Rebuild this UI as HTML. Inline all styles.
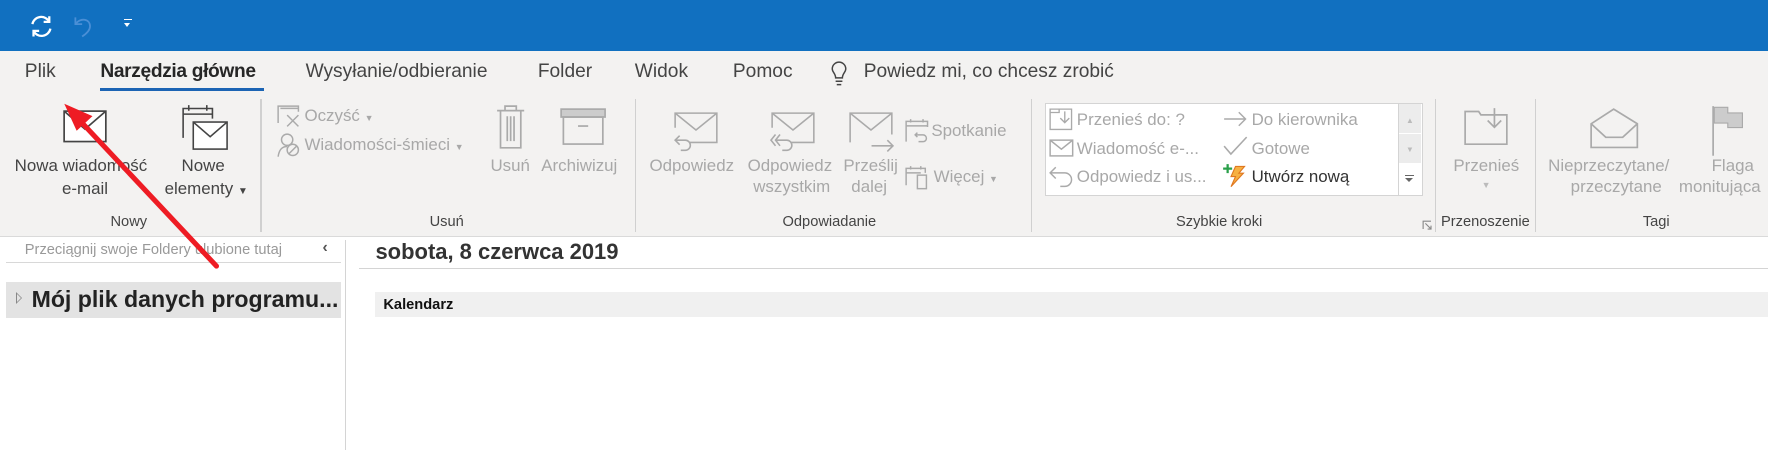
<!DOCTYPE html>
<html><head><meta charset="utf-8"><style>
html,body{margin:0;padding:0;background:#fff;overflow:hidden}
body{width:1768px;height:450px}
#w{position:relative;width:1568px;height:399px;zoom:1.12755;font-family:"Liberation Sans",sans-serif;color:#444;overflow:hidden}
.a{position:absolute;white-space:nowrap}
.g{color:#a8a8a8}
.t{font-size:17px;top:54px;color:#444}
.r{font-size:15px}
.lbl{font-size:13px;top:190px;color:#444}
.sep{position:absolute;width:1px;background:#d0d0d0;top:88px;height:118px}
svg{position:absolute;overflow:visible}
</style></head><body><div id="w">
<div class="a" style="left:0;top:0;width:1568px;height:45px;background:#1170c0"></div>
<svg style="left:26px;top:12px" width="22" height="22" viewBox="0 0 22 22" fill="none" stroke="#fff" stroke-width="2"><path d="M3 9 A8 8 0 0 1 18 7"/><path d="M19 13 A8 8 0 0 1 4 15"/><path d="M18 2 V7 H13" /><path d="M4 20 V15 H9"/></svg>
<svg style="left:64px;top:12px" width="22" height="22" viewBox="0 0 22 22" fill="none" stroke="#4a8fd6" stroke-width="1.6"><path d="M3 3 V9 H9"/><path d="M3 9 C7 3 16 4 16 11 C16 15 12 18 9 20"/></svg>
<div class="a" style="left:110px;top:17px;width:7px;height:1px;background:#fff"></div>
<div class="a" style="left:110px;top:20px;width:0;height:0;border-left:3.5px solid transparent;border-right:3.5px solid transparent;border-top:4px solid #fff"></div>

<div class="a" style="left:0;top:45px;width:1568px;height:164px;background:#f3f2f1;border-bottom:1px solid #dadada"></div>
<div class="a t" style="left:22px">Plik</div>
<div class="a t" style="left:89px;color:#262626;font-weight:bold;letter-spacing:-0.3px">Narzędzia główne</div>
<div class="a" style="left:89px;top:78px;width:145px;height:3px;background:#1b64b4"></div>
<div class="a t" style="left:271px">Wysyłanie/odbieranie</div>
<div class="a t" style="left:477px">Folder</div>
<div class="a t" style="left:563px">Widok</div>
<div class="a t" style="left:650px">Pomoc</div>
<svg style="left:736px;top:54px" width="16" height="22" viewBox="0 0 16 22" fill="none" stroke="#444" stroke-width="1.3"><path d="M5 15 C5 11 2 10 2 7 A6 6 0 0 1 14 7 C14 10 11 11 11 15 Z"/><path d="M5 18 H11 M6 21 H10"/></svg>
<div class="a t" style="left:766px">Powiedz mi, co chcesz zrobić</div>

<div class="sep" style="left:231px"></div><div class="sep" style="left:563px"></div><div class="sep" style="left:914px"></div><div class="sep" style="left:1273px"></div><div class="sep" style="left:1361px"></div>

<!-- Nowy -->
<svg style="left:56px;top:98px" width="40" height="30" viewBox="0 0 40 30" fill="#fff" stroke="#444" stroke-width="1.5"><rect x="1" y="1" width="37" height="27"/><path d="M1 1 L19.5 17 L38 1" fill="none"/></svg>
<svg style="left:161px;top:92px" width="42" height="42" viewBox="0 0 42 42" fill="none" stroke="#444" stroke-width="1.4"><path d="M1 30 V4 H27 V13"/><path d="M1 9 H27"/><path d="M6 1 V6 M22 1 V6"/><rect x="10" y="16" width="30" height="24" fill="#fff"/><path d="M10 16 L25 29 L40 16"/></svg>
<div class="a r" style="left:13px;top:138px">Nowa wiadomość</div>
<div class="a r" style="left:55px;top:159px">e-mail</div>
<div class="a r" style="left:161px;top:138px">Nowe</div>
<div class="a r" style="left:146px;top:159px">elementy <span style="font-size:9px">▼</span></div>
<div class="a lbl" style="left:98px">Nowy</div>

<!-- Usuń -->
<svg style="left:246px;top:93px" width="22" height="20" viewBox="0 0 22 20" fill="none" stroke="#aaa" stroke-width="1.3"><path d="M1 16 V1 H19 V6"/><path d="M3 3 H19"/><path d="M9 9 L19 19 M19 9 L9 19"/></svg>
<div class="a r g" style="left:270px;top:94px">Oczyść <span style="font-size:8px">▼</span></div>
<svg style="left:246px;top:118px" width="22" height="22" viewBox="0 0 22 22" fill="none" stroke="#aaa" stroke-width="1.3"><circle cx="9" cy="6" r="5"/><path d="M1 21 C2 14 5 12 9 12"/><circle cx="14" cy="15" r="5"/><path d="M10.5 18.5 L17.5 11.5"/></svg>
<div class="a r g" style="left:270px;top:120px">Wiadomości-śmieci <span style="font-size:8px">▼</span></div>
<svg style="left:440px;top:93px" width="26" height="40" viewBox="0 0 26 40" fill="none" stroke="#aaa" stroke-width="1.5"><path d="M1 5 H25 M8 5 V1 H18 V5"/><path d="M4 5 V38 H22 V5"/><path d="M10 10 V32 M13 10 V32 M16 10 V32"/></svg>
<div class="a r g" style="left:435px;top:138px">Usuń</div>
<svg style="left:497px;top:96px" width="42" height="34" viewBox="0 0 42 34" fill="none" stroke="#aaa" stroke-width="1.5"><rect x="1" y="1" width="39" height="7" fill="#ccc"/><rect x="3" y="8" width="35" height="24"/><path d="M16 16 H25"/></svg>
<div class="a r g" style="left:480px;top:138px">Archiwizuj</div>
<div class="a lbl" style="left:381px">Usuń</div>

<!-- Odpowiadanie -->
<svg style="left:598px;top:99px" width="40" height="36" viewBox="0 0 40 36" fill="none" stroke="#aaa" stroke-width="1.4"><path d="M14 27 H38 V1 H1 V14"/><path d="M1 1 L19.5 16 L38 1"/><path d="M5 21 L1 25 L5 29"/><path d="M1 25 H10 A4 4 0 0 1 10 34 H6"/></svg>
<svg style="left:684px;top:99px" width="40" height="36" viewBox="0 0 40 36" fill="none" stroke="#aaa" stroke-width="1.4"><path d="M18 27 H38 V1 H1 V14"/><path d="M1 1 L19.5 16 L38 1"/><path d="M8 20 L4 25 L8 30 M4 20 L0 25 L4 30"/><path d="M4 25 H14 A4 4 0 0 1 14 34 H10"/></svg>
<svg style="left:753px;top:99px" width="42" height="36" viewBox="0 0 42 36" fill="none" stroke="#aaa" stroke-width="1.4"><path d="M1 27 V1 H38 V20"/><path d="M1 1 L19.5 16 L38 1"/><path d="M20 30 H39 M34 25 L39 30 L34 35"/></svg>
<div class="a r g" style="left:576px;top:138px">Odpowiedz</div>
<div class="a r g" style="left:663px;top:138px">Odpowiedz</div>
<div class="a r g" style="left:668px;top:157px">wszystkim</div>
<div class="a r g" style="left:748px;top:138px">Prześlij</div>
<div class="a r g" style="left:755px;top:157px">dalej</div>
<svg style="left:803px;top:105px" width="22" height="22" viewBox="0 0 22 22" fill="none" stroke="#aaa" stroke-width="1.3"><path d="M1 21 V3 H20 V8 M1 7 H20 M5 1 V4 M16 1 V4"/><path d="M11 13 L9 15 L11 17 M9 15 H16 A3 3 0 0 1 16 21 H12"/></svg>
<div class="a r g" style="left:826px;top:107px">Spotkanie</div>
<svg style="left:803px;top:146px" width="22" height="22" viewBox="0 0 22 22" fill="none" stroke="#aaa" stroke-width="1.3"><path d="M1 18 V3 H18 V7 M1 7 H14 M5 1 V4 M14 1 V4"/><rect x="11" y="9" width="8" height="12"/></svg>
<div class="a r g" style="left:828px;top:148px">Więcej <span style="font-size:8px">▼</span></div>
<div class="a lbl" style="left:694px">Odpowiadanie</div>

<!-- Szybkie kroki -->
<div class="a" style="left:927px;top:91px;width:333px;height:81px;background:#fff;border:1px solid #d4d4d4"></div>
<div class="a" style="left:1240px;top:92px;width:1px;height:81px;background:#d4d4d4"></div>
<div class="a" style="left:1241px;top:92px;width:19px;height:26px;background:#ececec"></div>
<div class="a" style="left:1241px;top:119px;width:19px;height:26px;background:#ececec"></div>
<div class="a" style="left:1247px;top:103px;font-size:7px;color:#bbb">▲</div>
<div class="a" style="left:1247px;top:129px;font-size:7px;color:#bbb">▼</div>
<div class="a" style="left:1246px;top:155px;width:8px;height:1px;background:#666"></div>
<div class="a" style="left:1246px;top:158px;border-left:4px solid transparent;border-right:4px solid transparent;border-top:4px solid #666"></div>
<svg style="left:930px;top:96px" width="22" height="20" viewBox="0 0 22 20" fill="none" stroke="#aaa" stroke-width="1.2"><path d="M1 19 V1 H20 V19 Z M1 4 H9 V1"/><path d="M14 3 V13 M10 9 L14 13 L18 9"/></svg>
<div class="a r g" style="left:955px;top:98px">Przenieś do: ?</div>
<svg style="left:930px;top:123px" width="22" height="16" viewBox="0 0 22 16" fill="none" stroke="#aaa" stroke-width="1.3"><rect x="1" y="1" width="20" height="14"/><path d="M1 1 L11 9 L21 1"/></svg>
<div class="a r g" style="left:955px;top:123px">Wiadomość e-...</div>
<svg style="left:930px;top:146px" width="22" height="20" viewBox="0 0 22 20" fill="none" stroke="#aaa" stroke-width="1.3"><path d="M6 2 L1 7 L6 12 M1 7 H14 A6 6 0 0 1 14 19 H10"/></svg>
<div class="a r g" style="left:955px;top:148px">Odpowiedz i us...</div>
<svg style="left:1085px;top:98px" width="22" height="16" viewBox="0 0 22 16" fill="none" stroke="#aaa" stroke-width="1.3"><path d="M1 8 H20 M14 2 L20 8 L14 14"/></svg>
<div class="a r g" style="left:1110px;top:98px">Do kierownika</div>
<svg style="left:1085px;top:121px" width="22" height="18" viewBox="0 0 22 18" fill="none" stroke="#aaa" stroke-width="1.4"><path d="M1 9 L7 16 L21 1"/></svg>
<div class="a r g" style="left:1110px;top:123px">Gotowe</div>
<svg style="left:1084px;top:145px" width="22" height="22" viewBox="0 0 22 22"><path d="M1 5 H9 M5 1 V9" stroke="#2aa04a" stroke-width="2"/><path d="M12 3 H20 L15 9 H19 L8 21 L12 12 H8 Z" fill="#f6b042" stroke="#e07820" stroke-width="1"/></svg>
<div class="a r" style="left:1110px;top:148px;color:#333">Utwórz nową</div>
<div class="a lbl" style="left:1043px">Szybkie kroki</div>
<svg style="left:1261px;top:195px" width="9" height="9" viewBox="0 0 9 9" fill="none" stroke="#888" stroke-width="1"><path d="M1 8 V1 H8 M3 3 L8 8 M5 8 H8 V5"/></svg>

<!-- Przenoszenie -->
<svg style="left:1298px;top:95px" width="40" height="34" viewBox="0 0 40 34" fill="none" stroke="#aaa" stroke-width="1.5"><path d="M1 33 V4 H13 L15 7 H38 V33 Z"/><path d="M27 1 V18 M21 12 L27 18 L33 12"/></svg>
<div class="a r g" style="left:1289px;top:138px">Przenieś</div>
<div class="a" style="left:1314px;top:160px;font-size:8px;color:#bbb">▼</div>
<div class="a lbl" style="left:1278px">Przenoszenie</div>

<!-- Tagi -->
<svg style="left:1410px;top:96px" width="44" height="36" viewBox="0 0 44 36" fill="none" stroke="#aaa" stroke-width="1.5"><path d="M1 14 L21 1 L42 14 V35 H1 Z"/><path d="M1 14 L14 26 H29 L42 14"/></svg>
<div class="a r g" style="left:1373px;top:138px">Nieprzeczytane/</div>
<div class="a r g" style="left:1393px;top:157px">przeczytane</div>
<svg style="left:1518px;top:93px" width="30" height="46" viewBox="0 0 30 46"><path d="M1 1 V45" stroke="#aaa" stroke-width="1.5"/><path d="M2 2 H14 V7 H27 V20 H14 V16 H2 Z" fill="#ccc" stroke="#aaa" stroke-width="1"/></svg>
<div class="a r g" style="left:1518px;top:138px">Flaga</div>
<div class="a r g" style="left:1489px;top:157px">monitująca</div>
<div class="a lbl" style="left:1457px">Tagi</div>

<!-- Sidebar -->
<div class="a" style="left:306px;top:213px;width:1px;height:186px;background:#d4d4d4"></div>
<div class="a" style="left:22px;top:215px;font-size:13px;color:#999">Przeciągnij swoje Foldery ulubione tutaj</div>
<div class="a" style="left:286px;top:212px;font-size:14px;color:#555;font-weight:bold">‹</div>
<div class="a" style="left:5px;top:232px;width:297px;height:1px;background:#d8d8d8"></div>
<div class="a" style="left:5px;top:250px;width:297px;height:32px;background:#e3e3e3"></div>
<div class="a" style="left:14px;top:259px;width:0;height:0;border-top:6px solid transparent;border-bottom:6px solid transparent;border-left:6px solid #888"></div>
<div class="a" style="left:15px;top:261px;width:0;height:0;border-top:4px solid transparent;border-bottom:4px solid transparent;border-left:4px solid #e3e3e3"></div>
<div class="a" style="left:28px;top:254px;font-size:20.5px;font-weight:bold;color:#222">Mój plik danych programu...</div>

<!-- Main -->
<div class="a" style="left:333px;top:212px;font-size:19.5px;font-weight:bold;color:#333">sobota, 8 czerwca 2019</div>
<div class="a" style="left:318px;top:238px;width:1250px;height:1px;background:#d4d4d4"></div>
<div class="a" style="left:333px;top:259px;width:1235px;height:22px;background:#f0f0f0"></div>
<div class="a" style="left:340px;top:263px;font-size:13px;font-weight:bold;color:#111">Kalendarz</div>

<!-- Red arrow -->
<svg style="left:0;top:0" width="1568" height="399"><line x1="192" y1="236" x2="70" y2="106" stroke="#ee1c24" stroke-width="4.5" stroke-linecap="round"/><path d="M57 92 L82 103 L68 116 Z" fill="#ee1c24"/></svg>
</div></body></html>
